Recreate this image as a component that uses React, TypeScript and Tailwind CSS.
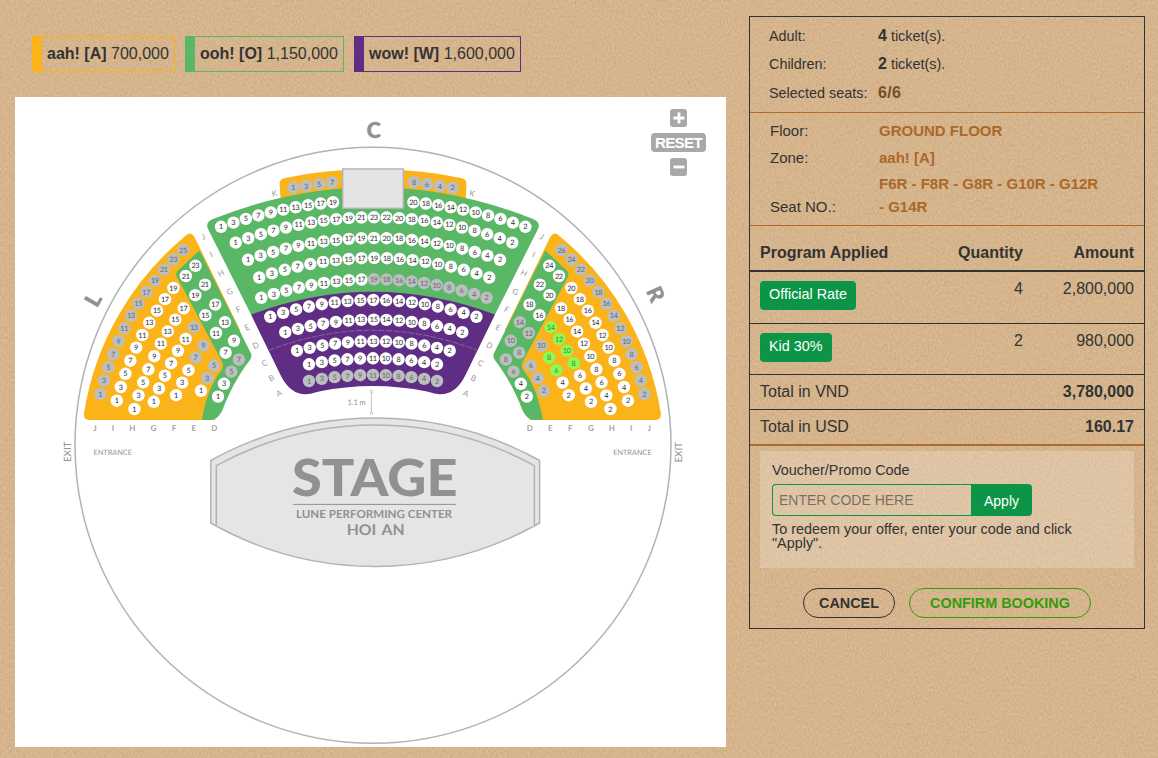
import type { ReactNode } from "react";

type Status = "free" | "taken" | "picked";

const SEAT_FILL: Record<Status, string> = {
  free: "#ffffff",
  taken: "#bcbec0",
  picked: "#8cfb58",
};

const SEAT_TEXT: Record<Status, string> = {
  free: "#2b2b2b",
  taken: "#66686a",
  picked: "#3f8a26",
};

const LEGEND = [
  { name: "aah! [A]", price: "700,000", className: "w-[143px] border-[#fbb31a]" },
  { name: "ooh! [O]", price: "1,150,000", className: "w-[159px] border-[#59b766]" },
  { name: "wow! [W]", price: "1,600,000", className: "w-[167px] border-[#5f2e84]" },
];

// Central rows: x of the first/last seat, y in the middle and at both ends.
const CENTER_ROWS = [
  { row: "I", count: 23, x1: 235.7, x2: 512.3, yMid: 217.3, yEnd: 242.6, takenFrom: 99 },
  { row: "H", count: 21, x1: 248, x2: 500, yMid: 238, yEnd: 259.8, takenFrom: 99 },
  { row: "G", count: 19, x1: 259.2, x2: 489.3, yMid: 258, yEnd: 277.5, takenFrom: 99 },
  { row: "F", count: 19, x1: 261.3, x2: 486.7, yMid: 279.3, yEnd: 297.8, takenFrom: 9 },
  { row: "E", count: 17, x1: 270.3, x2: 476.4, yMid: 300, yEnd: 316.8, takenFrom: 99 },
  { row: "D", count: 15, x1: 285.3, x2: 462.3, yMid: 319.6, yEnd: 332.2, takenFrom: 99 },
  { row: "C", count: 13, x1: 297, x2: 449.7, yMid: 341.3, yEnd: 350.7, takenFrom: 99 },
  { row: "B", count: 11, x1: 309, x2: 437, yMid: 358.3, yEnd: 364.3, takenFrom: 99 },
  { row: "A", count: 11, x1: 309, x2: 437, yMid: 375, yEnd: 381, takenFrom: 0 },
];

const T: Status = "taken";
const F: Status = "free";
const P: Status = "picked";

// Wing seats: left seat number, x, y, status on the left, status on the right.
// The right wing is the mirror image and carries the next even number.
const WING_SEATS: [number, number, number, Status, Status][] = [
  [25, 183.3, 250, T, T],
  [23, 173.3, 259.5, T, T],
  [21, 164, 269.7, T, T],
  [19, 155, 280.7, T, T],
  [17, 146.3, 292, T, T],
  [15, 138.3, 303.7, T, T],
  [13, 131, 315.8, T, T],
  [11, 124.4, 328.3, T, T],
  [9, 118.5, 341, T, T],
  [7, 113.1, 354.2, T, T],
  [5, 108.3, 367.2, T, T],
  [3, 104, 380.5, T, T],
  [1, 100.4, 394, T, T],

  [19, 173.4, 288, F, F],
  [17, 165, 299.2, F, F],
  [15, 157, 310.7, F, F],
  [13, 149.3, 322.8, F, F],
  [11, 142.3, 335, F, F],
  [9, 136.2, 347.6, F, F],
  [7, 130.4, 360.7, F, F],
  [5, 125.4, 373.8, F, F],
  [3, 120.8, 387, F, F],
  [1, 116.8, 400.7, F, F],

  [17, 183.7, 308.3, F, F],
  [15, 175.3, 319.7, F, F],
  [13, 167.7, 331.4, F, F],
  [11, 160.8, 343.7, F, F],
  [9, 154.3, 356.2, F, F],
  [7, 148.4, 369.3, F, F],
  [5, 143.2, 382.3, F, F],
  [3, 138.5, 395.4, F, F],
  [1, 134.4, 409, F, F],

  [13, 194, 327.2, T, P],
  [11, 185.7, 338.9, F, P],
  [9, 178, 350.8, F, P],
  [7, 171.1, 363.2, F, P],
  [5, 164.8, 375.7, F, F],
  [3, 159, 388.5, F, F],
  [1, 153.8, 401.8, F, F],

  [9, 203.4, 345.7, T, T],
  [7, 195.7, 357.7, T, P],
  [5, 188.5, 370.2, F, P],
  [3, 182.2, 382.6, F, F],
  [1, 176.1, 395.2, F, F],

  [5, 214, 365.7, T, T],
  [3, 207.2, 378, T, T],
  [1, 201, 390.8, F, T],

  [23, 195.5, 265.8, F, F],
  [21, 185.8, 276, F, F],
  [21, 205, 284.7, F, F],
  [19, 195.3, 295.2, F, F],
  [17, 215.3, 304.6, F, F],
  [15, 205.4, 315.2, F, F],
  [13, 225, 322.1, F, T],
  [11, 216, 333, F, T],
  [9, 234, 340.8, F, T],
  [7, 225.6, 352.7, F, T],
  [7, 238.9, 359.5, T, T],
  [5, 231.3, 371.7, T, T],
  [3, 224, 383.8, F, F],
  [1, 218, 396.6, F, F],
];

const AISLE_LETTERS: [string, number, number][] = [
  ["J", 203.3, 236.7],
  ["I", 211.3, 254.5],
  ["H", 221, 273],
  ["G", 229.7, 291.7],
  ["F", 238.2, 309.5],
  ["E", 247, 327.4],
  ["D", 255.6, 345.4],
  ["C", 264.3, 363],
  ["B", 271.4, 378],
  ["A", 279, 393.3],
];

const FOOT_LETTERS: [string, number][] = [
  ["J", 95],
  ["I", 113],
  ["H", 132.3],
  ["G", 153.3],
  ["F", 174],
  ["E", 193.8],
  ["D", 214.4],
];

function Seat({ n, x, y, status }: { n: number; x: number; y: number; status: Status }) {
  return (
    <g>
      <circle cx={x} cy={y} r={6.2} fill={SEAT_FILL[status]} />
      <text
        x={x - 0.15}
        y={y + 2.6}
        textAnchor="middle"
        fontSize={7.3}
        letterSpacing={-0.3}
        fill={SEAT_TEXT[status]}
      >
        {n}
      </text>
    </g>
  );
}

function seatNumber(index: number, count: number) {
  const odd = Math.ceil(count / 2);
  return index < odd ? index * 2 + 1 : (count - index) * 2;
}

function CenterSeats() {
  return (
    <>
      {[7, 5, 3, 1].map((n, i) => {
        const dx = 41 + i * 12.9;
        const y = 182.2 + i * 1.85;
        return (
          <g key={n}>
            <Seat n={n} x={373 - dx} y={y} status="taken" />
            <Seat n={n + 1} x={373 + dx} y={y} status="taken" />
          </g>
        );
      })}
      {Array.from({ length: 10 }, (_, i) => {
        const dx = 40.2 + i * 12.44;
        const y = 200.4 + 0.00114 * dx * dx;
        return (
          <g key={i}>
            <Seat n={19 - i * 2} x={373.2 - dx} y={y} status="free" />
            <Seat n={20 - i * 2} x={373.2 + dx} y={y} status="free" />
          </g>
        );
      })}
      {CENTER_ROWS.map((r) =>
        Array.from({ length: r.count }, (_, i) => {
          const t = (i / (r.count - 1)) * 2 - 1;
          return (
            <Seat
              key={r.row + i}
              n={seatNumber(i, r.count)}
              x={r.x1 + ((r.x2 - r.x1) * (t + 1)) / 2}
              y={r.yMid + (r.yEnd - r.yMid) * t * t}
              status={i >= r.takenFrom ? "taken" : "free"}
            />
          );
        })
      )}
    </>
  );
}

function WingShape() {
  return (
    <>
      <path
        d="M186.5 235 Q191 231 194.5 237 L240 330 L215 420 H89 Q83.5 420 84 413 A289 289 0 0 1 186.5 235 Z"
        fill="#fbb31a"
      />
      <path
        d="M199.5 250.5 L251 353.5 Q252.3 356.5 250 360 C238 375 228 395 222.5 410 Q218 420 210 420 H202 C205 401 211 383 221.5 370 Q224 366 222 361.5 L177 277 Q175 273 178.5 270 Z"
        fill="#59b766"
      />
    </>
  );
}

function SeatMap() {
  return (
    <svg
      viewBox="15 97 711 650"
      textRendering="geometricPrecision"
      className="block h-[650px] w-[711px] font-[Lato,'Open_Sans',sans-serif]"
    >
      <defs>
        <pattern id="dots" width="8" height="6" patternUnits="userSpaceOnUse">
          <rect width="8" height="6" fill="#e5e5e5" />
          <rect x="1" y="1" width="1" height="1" fill="#dadada" />
          <rect x="5" y="4" width="1" height="1" fill="#dadada" />
        </pattern>
      </defs>

      <circle cx="373" cy="445.3" r="298" fill="none" stroke="#b1b3b4" strokeWidth="1.5" />

      {/* zones */}
      <WingShape />
      <g transform="translate(744.8 0) scale(-1 1)">
        <WingShape />
      </g>
      <path d="M281 205 L279.6 184 Q279.5 179.5 284 178.3 Q312 172 342 170.2 V205 Z" fill="#fbb31a" />
      <path d="M465.5 205 L466.4 184 Q466.5 179.5 462 178.3 Q434 172 404 170.2 V205 Z" fill="#fbb31a" />
      <path
        d="M213 219 Q373 155.5 533 219 Q541 222 538 229 L495 314.5 H251 L208 229 Q205 222 213 219 Z"
        fill="#59b766"
      />
      <path
        d="M251 314.5 Q373 269 495 314.5 L465.5 375 Q456 394.5 440 394.3 Q435 394 427 391.5 Q373 380.5 319 391.5 Q311 394 306 394.3 Q290 394.5 280.5 375 Z"
        fill="#5f2e84"
      />
      <path
        d="M268.5 350.5 Q373 310 477.5 350.5"
        fill="none"
        stroke="#9a78b4"
        strokeWidth="0.7"
        strokeDasharray="6 1.5"
      />
      <rect x="342.7" y="168.9" width="60.6" height="39.4" fill="url(#dots)" stroke="#b3b4b6" strokeWidth="1.4" />

      {/* seats */}
      <CenterSeats />
      {WING_SEATS.map(([n, x, y, left, right]) => (
        <g key={`${n}-${x}`}>
          <Seat n={n} x={x} y={y} status={left} />
          <Seat n={n + 1} x={744.8 - x} y={y} status={right} />
        </g>
      ))}

      {/* row letters */}
      <g fontSize="8" fill="#97999b" textAnchor="middle">
        {AISLE_LETTERS.map(([letter, x, y]) => (
          <g key={letter}>
            <text transform={`translate(${x} ${y}) rotate(-26)`} y="2.9">
              {letter}
            </text>
            <text transform={`translate(${745 - x} ${y}) rotate(26)`} y="2.9">
              {letter}
            </text>
          </g>
        ))}
        <text transform="translate(274.4 193.4) rotate(-14)" y="2.9">K</text>
        <text transform="translate(472 193.4) rotate(14)" y="2.9">K</text>
      </g>
      <g fontSize="8" fontWeight="700" fill="#a0a2a4" textAnchor="middle">
        {FOOT_LETTERS.map(([letter, x]) => (
          <g key={letter}>
            <text x={x} y="431">{letter}</text>
            <text x={744.2 - x} y="431">{letter}</text>
          </g>
        ))}
      </g>

      <g fill="#8f9193" fontWeight="800" fontSize="22" textAnchor="middle">
        <text x="373.7" y="138.3">C</text>
        <text transform="translate(93 299.5) rotate(-60)" y="8">L</text>
        <text transform="translate(655.7 294) rotate(66)" y="8">R</text>
      </g>

      <g fill="#8f9193">
        <text x="93.5" y="455" fontSize="7.5" textLength="38.5" lengthAdjust="spacingAndGlyphs">ENTRANCE</text>
        <text x="613.2" y="455" fontSize="7.5" textLength="38.5" lengthAdjust="spacingAndGlyphs">ENTRANCE</text>
        <text transform="translate(71 462) rotate(-90)" fontSize="10" textLength="20.5">EXIT</text>
        <text transform="translate(682 462.5) rotate(-90)" fontSize="10" textLength="20.5">EXIT</text>
        <text x="347.6" y="405.3" fontSize="7.5" textLength="18">1.1 m</text>
      </g>
      <g fill="#ffffff" stroke="#b1b3b4" strokeWidth="0.8">
        <path d="M371.4 392.5 V412" />
        <circle cx="371.4" cy="391.5" r="1.3" />
        <circle cx="371.4" cy="413.3" r="1.3" />
      </g>

      {/* stage */}
      <g fill="#e5e5e5" stroke="#b1b3b4" strokeWidth="1.5" strokeLinejoin="round">
        <path d="M210.8 460.5 A340 340 0 0 1 539.6 460.5 V523 A333 333 0 0 1 210.8 523 Z" />
        <path d="M216.3 526.3 V465.6 A332 332 0 0 1 534.4 465.6 V526.3" />
      </g>
      <g fill="#8f9193">
        <text x="292" y="496" fontSize="51" fontWeight="900" textLength="165.5" lengthAdjust="spacingAndGlyphs">
          STAGE
        </text>
        <rect x="293" y="503.9" width="163" height="1" />
        <text x="296" y="517.6" fontSize="11.2" fontWeight="700" textLength="156" lengthAdjust="spacingAndGlyphs">
          LUNE PERFORMING CENTER
        </text>
        <text x="346.7" y="534.7" fontSize="14.8" fontWeight="700" wordSpacing="2" textLength="58" lengthAdjust="spacingAndGlyphs">
          HOI AN
        </text>
      </g>
    </svg>
  );
}

function ZoomControls() {
  return (
    <div className="absolute left-[636px] top-[12px] flex w-[55px] flex-col items-center">
      <button className="flex h-[18px] w-[17px] items-center justify-center rounded-[3px] bg-[#a8a8a8]">
        <svg viewBox="0 0 12 12" className="h-3 w-3">
          <path d="M6 0.5 V11.5 M0.5 6 H11.5" stroke="#fff" strokeWidth="2.8" />
        </svg>
      </button>
      <button className="mt-[6px] flex h-[19px] w-[55px] items-center justify-center rounded-[4px] bg-[#a8a8a8] text-[15.2px] font-bold leading-none tracking-[-0.7px] text-white">
        RESET
      </button>
      <button className="mt-[6px] flex h-[18px] w-[17px] items-center justify-center rounded-[3px] bg-[#a8a8a8]">
        <svg viewBox="0 0 12 12" className="h-3 w-3">
          <path d="M0.5 6 H11.5" stroke="#fff" strokeWidth="2.8" />
        </svg>
      </button>
    </div>
  );
}

function KraftPaper() {
  return (
    <svg className="absolute inset-0 h-full w-full" aria-hidden="true">
      <filter id="kraft" x="0" y="0" width="100%" height="100%" colorInterpolationFilters="sRGB">
        <feTurbulence type="fractalNoise" baseFrequency="0.6 0.38" numOctaves="3" seed="7" />
        <feColorMatrix
          values="0.12 0 0 0 0.776
                  0.12 0.06 0 0 0.617
                  0.1 0.04 0.08 0 0.44
                  0 0 0 0 1"
        />
      </filter>
      <rect width="100%" height="100%" filter="url(#kraft)" />
    </svg>
  );
}

function InfoRow({ label, children, className }: { label: string; children: ReactNode; className: string }) {
  return (
    <div className={`flex ${className}`}>
      <span className="w-[109px] shrink-0 whitespace-nowrap">{label}</span>
      <span>{children}</span>
    </div>
  );
}

function ProgramRow({ name, quantity, amount, className }: { name: string; quantity: number; amount: string; className: string }) {
  return (
    <div className={`grid grid-cols-[1fr_80px_111px] border-b border-[#333] px-[10px] ${className}`}>
      <div className="pt-[9px]">
        <span className="inline-block rounded-[4px] bg-[#0c9547] px-[9px] pb-[5px] pt-[3px] text-[14.4px] leading-[21px] text-white">
          {name}
        </span>
      </div>
      <div className="pt-[5px] text-right leading-6">{quantity}</div>
      <div className="pt-[5px] text-right leading-6">{amount}</div>
    </div>
  );
}

function BookingPanel() {
  return (
    <aside className="mt-4 h-[613px] w-[396px] border border-[#333] text-base">
      <div className="h-[96px] border-b border-[#b06a2b] px-[19px] pt-[5px] text-[14.4px]">
        <InfoRow label="Adult:" className="h-7 leading-7">
          <b className="text-base leading-7">4</b> ticket(s).
        </InfoRow>
        <InfoRow label="Children:" className="h-7 leading-7">
          <b className="text-base leading-7">2</b> ticket(s).
        </InfoRow>
        <InfoRow label="Selected seats:" className="h-[30px] leading-[30px]">
          <b className="text-base leading-[30px] tracking-[0.3px] text-[#7a4c20]">6/6</b>
        </InfoRow>
      </div>

      <div className="h-[113px] border-b border-[#b06a2b] px-5 pt-1 text-[15px]">
        <InfoRow label="Floor:" className="h-7 leading-7">
          <b className="text-[#aa6829]">GROUND FLOOR</b>
        </InfoRow>
        <InfoRow label="Zone:" className="h-[26px] leading-[26px]">
          <b className="text-[#aa6829]">aah! [A]</b>
        </InfoRow>
        <InfoRow label="Seat NO.:" className="mt-px items-end leading-[23px]">
          <b className="text-[#aa6829]">
            F6R - F8R - G8R - G10R - G12R
            <br />- G14R
          </b>
        </InfoRow>
      </div>

      <div className="grid h-[46px] grid-cols-[1fr_80px_111px] border-b-2 border-[#333] px-[10px] pt-[15px] font-bold leading-6">
        <div>Program Applied</div>
        <div className="text-right">Quantity</div>
        <div className="text-right">Amount</div>
      </div>
      <ProgramRow name="Official Rate" quantity={4} amount="2,800,000" className="h-[52px]" />
      <ProgramRow name="Kid 30%" quantity={2} amount="980,000" className="h-[51px]" />
      <div className="flex h-[35px] justify-between border-b border-[#333] px-[10px] leading-[34px]">
        <span>Total in VND</span>
        <b>3,780,000</b>
      </div>
      <div className="flex h-[36px] justify-between border-b-2 border-[#b06a2b] px-[10px] leading-[34px]">
        <span>Total in USD</span>
        <b>160.17</b>
      </div>

      <div className="mx-[10px] mt-[5px] h-[117px] bg-white/22 px-3 pt-[9px] text-[14.4px]">
        <label className="block leading-5">Voucher/Promo Code</label>
        <div className="mt-[4px] flex h-8">
          <input
            placeholder="ENTER CODE HERE"
            className="w-[199px] rounded-l-[4px] border border-r-0 border-[#0c9547] bg-transparent px-[6px] text-sm placeholder:text-[#333]/60"
          />
          <button className="w-[61px] rounded-r-[4px] bg-[#0c9547] pt-[2px] text-[14px] text-white">Apply</button>
        </div>
        <p className="mt-[6px] leading-[14px]">
          To redeem your offer, enter your code and click
          <br />
          "Apply".
        </p>
      </div>

      <div className="mt-5 flex justify-center gap-[14px] text-[14.4px] font-bold">
        <button className="h-[30px] w-[92px] rounded-full border border-[#333] pt-px">CANCEL</button>
        <button className="h-[30px] w-[182px] rounded-full border border-[#339c0c] pt-px text-[#339c0c]">
          CONFIRM BOOKING
        </button>
      </div>
    </aside>
  );
}

export default function App() {
  return (
    <div className="relative h-[758px] w-[1158px] overflow-hidden bg-[#d4b48c] font-['Liberation_Sans',Arial,sans-serif] text-[#333]">
      <KraftPaper />
      <div className="relative flex gap-[23px] pl-[15px]">
        <main className="w-[711px]">
          <div className="flex h-[97px] gap-[10px] pl-[17px] pt-9">
            {LEGEND.map((zone) => (
              <div
                key={zone.name}
                className={`h-9 whitespace-nowrap border border-l-[10px] pl-[5px] text-base leading-[34px] ${zone.className}`}
              >
                <b>{zone.name}</b> {zone.price}
              </div>
            ))}
          </div>
          <div className="relative bg-white">
            <SeatMap />
            <ZoomControls />
          </div>
        </main>
        <BookingPanel />
      </div>
    </div>
  );
}
